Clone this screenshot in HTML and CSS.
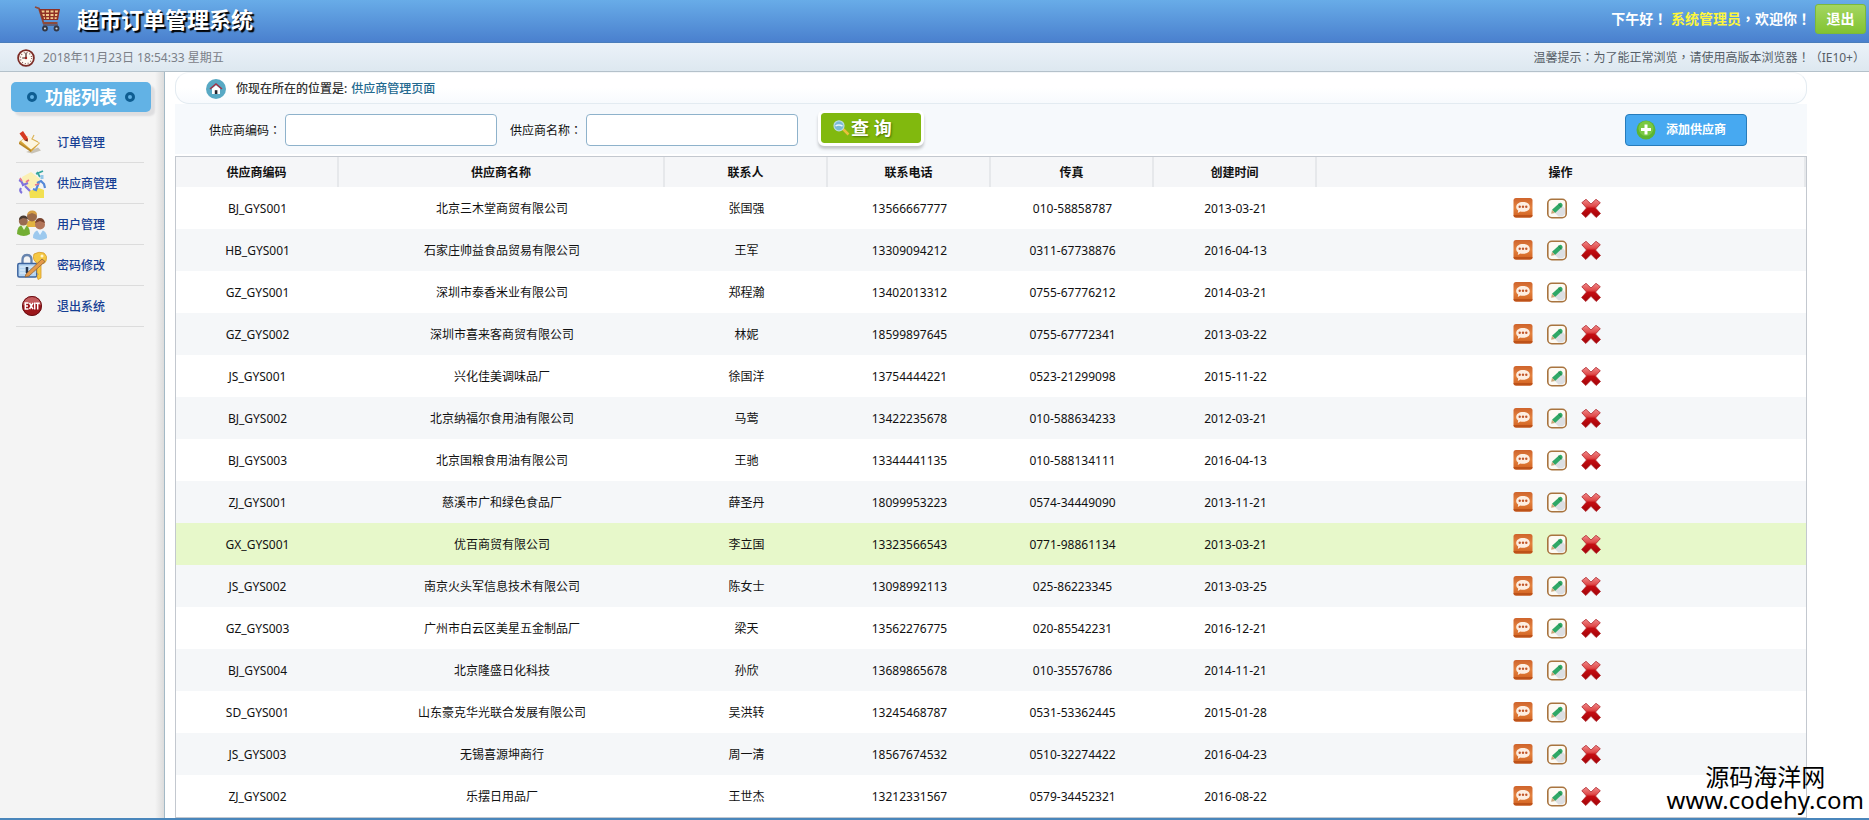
FILE: index.html
```html
<!DOCTYPE html>
<html lang="zh-CN">
<head>
<meta charset="utf-8">
<title>超市订单管理系统</title>
<link rel="stylesheet" href="styles.css">
</head>
<body>
<svg class="sprite" aria-hidden="true">
  <defs>
    <linearGradient id="gOrange" x1="0" y1="0" x2="0" y2="1"><stop offset="0" stop-color="#cf642c"/><stop offset=".5" stop-color="#e3823f"/><stop offset="1" stop-color="#d2601f"/></linearGradient>
    <linearGradient id="gRed" x1="0" y1="0" x2="0" y2="1"><stop offset="0" stop-color="#f08a8a"/><stop offset=".38" stop-color="#e04a4a"/><stop offset=".5" stop-color="#c40d12"/><stop offset="1" stop-color="#a30308"/></linearGradient>
  </defs>
  <symbol id="view" viewBox="0 0 20 21">
    <rect x=".5" y="0" width="19" height="19.500" rx="2.500" fill="url(#gOrange)"/>
    <path d="M.5 17h19q0 2.500-2.500 2.500H3q-2.500 0-2.500-2.500z" fill="#bd5219"/>
    <path d="M10 4c4 0 6.800 2 6.800 5s-2.800 4.800-6.800 4.800c-1 0-1.900-.1-2.700-.3L4.800 15l.4-2.500C3.900 11.600 3.200 10.500 3.200 9c0-3 2.800-5 6.800-5z" fill="#fdeee2"/>
    <g fill="#c2572a"><circle cx="6.700" cy="8.800" r="1.200"/><circle cx="10" cy="8.800" r="1.200"/><circle cx="13.300" cy="8.800" r="1.200"/></g>
  </symbol>
  <symbol id="edit" viewBox="0 0 20 20">
    <rect x=".8" y=".8" width="18.400" height="18.400" rx="4" fill="#fdfaf4" stroke="#a8743f" stroke-width="1.600"/>
    <path d="M8 14.500l7.500-7 2.500 2.500v5.500l-2.500 2.500h-4z" fill="#dcdfe3"/>
    <path d="M5 11.300l7.200-6.600q1.300-1 2.700.4t.4 2.700l-7.200 6.600z" fill="#2fa866"/>
    <path d="M11.400 5.500l3.100 3.100" stroke="#1c7a47" stroke-width="1"/>
    <path d="M5 11.300l3.100 3.100-4 .8z" fill="#c9a678"/>
  </symbol>
  <symbol id="del" viewBox="0 0 20 20">
    <path d="M5 .8l5 4.700 5-4.700 4.300 3.400L14.500 9.500l5 5.500-4.300 4L10 13.800 4.800 19 .6 15l4.900-5.500L.8 4.200z" fill="url(#gRed)" stroke="#b02a2e" stroke-width=".8"/>
  </symbol>
</svg>

<header class="top">
  <h1 class="brand">
    <svg class="cart" width="28" height="27" viewBox="0 0 28 27" aria-hidden="true">
      <path d="M1 2l4 1.500 4.500 14.500h14" fill="none" stroke="#8d4a3c" stroke-width="1.800"/>
      <path d="M5 4h21l-2 11H8.500z" fill="#8f3024"/>
      <g fill="#f2c98b"><path d="M7.500 5.500h3v2h-2.500zM12 5.500h3v2h-3zM16.500 5.500h3v2h-3zM21 5.500h3l-.3 2H21z"/><path d="M8.300 9h2.400v2H9zM12 9h3v2h-3zM16.500 9h3v2h-3zM21 9h2.500l-.4 2H21zM9.500 12.300H11v1.700h-1zM12.300 12.300H15V14h-2.700zM16.500 12.300h2.700V14h-2.700zM20.600 12.300h2.200l-.3 1.700h-1.900z"/></g>
      <path d="M9 20h15" stroke="#5d5d78" stroke-width="1.800"/>
      <g fill="#cfd4dc" stroke="#343846" stroke-width="1.800"><circle cx="11" cy="23.500" r="2"/><circle cx="22.500" cy="23.500" r="2"/></g>
    </svg>
    超市订单管理系统
  </h1>
  <p class="hello">下午好<span class="mark" lang="zh-TW">！</span> <span class="user">系统管理员</span><span class="mark" lang="zh-TW">，</span>欢迎你<span class="mark" lang="zh-TW">！</span></p>
  <a class="logout" href="#">退出</a>
</header>

<section class="timebar">
  <svg width="18" height="18" viewBox="0 0 18 18" aria-hidden="true">
    <circle cx="9" cy="9" r="7.900" fill="#fffaf3" stroke="#7c2b25" stroke-width="1.800"/>
    <circle cx="9" cy="9" r="5.600" fill="none" stroke="#8a6058" stroke-width="1.200" stroke-dasharray="1 1.930"/>
    <path d="M9 3.800V9H5.200" fill="none" stroke="#3a1e1c" stroke-width="1.200"/><circle cx="9" cy="9" r="1.200" fill="#a3211c"/>
  </svg>
  <time>2018年11月23日 18:54:33 星期五</time>
  <p class="tip">温馨提示<span class="mark" lang="zh-TW">：</span>为了能正常浏览<span class="mark" lang="zh-TW">，</span>请使用高版本浏览器<span class="mark" lang="zh-TW">！（</span>IE10+<span class="mark" lang="zh-TW">）</span></p>
</section>

<div class="layout">
  <aside class="side">
    <h2 class="side-title"><i class="ring"></i>功能列表<i class="ring"></i></h2>
    <nav>
      <ul class="menu">
        <li><a href="#">
          <svg width="30" height="30" viewBox="0 0 30 30" aria-hidden="true">
            <path d="M9 24l6 1.500 9-3-3-3z" fill="#c9c3b6"/>
            <path d="M2 14l8-6 13 7-9 9z" fill="#d7a437"/><path d="M4 13l7-5 11 7-8 6.500z" fill="#fdf6e0"/>
            <path d="M2 14l12 8v2L2 16z" fill="#b88626"/>
            <path d="M17 7l-2 4 6 3" fill="none" stroke="#dcb65c" stroke-width="1.200"/>
            <path d="M2.500 5.500l3.500-2.500 5 7.500-.4 3-3-1z" fill="#d63a22"/><path d="M8 12.500l2.600 1-.2-2.500z" fill="#4d2a20"/>
          </svg>订单管理</a></li>
        <li><a href="#">
          <svg width="30" height="30" viewBox="0 0 30 30" aria-hidden="true">
            <path d="M5 8l9-5 9 7-2 6-8 4-7-5z" fill="#fbf0b4"/>
            <path d="M12 22l10-3 5 2v8H13z" fill="#f2e052"/>
            <path d="M2 11q3 1 4 5l5-2M4 19q-2 3 1 5M8 17l5 5" fill="none" stroke="#7f73dd" stroke-width="2.200"/>
            <path d="M19 5l7-3M20 3l3 5" stroke="#36a79d" stroke-width="1.800"/>
            <path d="M20 14l4-2 3 3 1 4M22 13l-3 8-3-1" fill="none" stroke="#5488d8" stroke-width="2.200"/>
            <path d="M3 9l2 3M9 13l3-2M18 16l4-1" stroke="#e8788a" stroke-width="1.600"/><path d="M25 6v4" stroke="#92c7e9" stroke-width="3"/>
          </svg>供应商管理</a></li>
        <li><a href="#">
          <svg width="30" height="30" viewBox="0 0 30 30" aria-hidden="true">
            <path d="M9 17q0-7 6-7t7 7z" fill="#e2b340"/><circle cx="15" cy="6.500" r="5" fill="#9c6b48"/><path d="M10 5q1-5 6-4.500 4 .5 4 4.500l-5-2z" fill="#d6a046"/>
            <path d="M0 24q0-9 6.500-9t6.500 9q-6 4-13 0z" fill="#73ae34"/><path d="M4 15l3 5 3-5z" fill="#e6f3d3"/><circle cx="6.300" cy="11" r="4.500" fill="#986b52"/><path d="M2 10q0-4 4-4.500t5 3.500l-5-1z" fill="#493a31"/>
            <path d="M16 28q0-8 7-8t7 8q-7 4-14 0z" fill="#9cc9ee"/><path d="M20 20l3 5 3-5z" fill="#eaf5ff"/><circle cx="23" cy="14.500" r="5" fill="#b3765a"/><path d="M18 13q1-5 5-5t5 5l-5-2z" fill="#79432e"/>
          </svg>用户管理</a></li>
        <li><a href="#">
          <svg width="30" height="30" viewBox="0 0 30 30" aria-hidden="true">
            <path d="M5.500 13V9q0-5 4.500-5t4.500 5v4" fill="none" stroke="#6784ae" stroke-width="2.300"/>
            <rect x=".8" y="12.500" width="19" height="13.500" rx="1.500" fill="#b6d5f2" stroke="#3d649f" stroke-width="1.500"/>
            <path d="M3 16h14M3 19h12M3 22h14" stroke="#e3f0fb" stroke-width="1"/><path d="M10 16v6" stroke="#27364f" stroke-width="2.500"/>
            <path d="M17 3q5-3 10-1 4 3 2 8-1 3-5 3v14l-3 1.500-1-4 1.500-1-1.500-2V12q-5-3-3-9z" fill="#f5c844" stroke="#d79b28" stroke-width=".8"/><circle cx="25" cy="5" r="1.500" fill="#fff6d0"/>
            <path d="M9 23L25 8l3 2.500L12 25l-4 1z" fill="#e59a4b" stroke="#8d643f" stroke-width=".8"/>
          </svg>密码修改</a></li>
        <li><a href="#">
          <svg width="30" height="30" viewBox="0 0 30 30" aria-hidden="true">
            <circle cx="15" cy="14" r="9.900" fill="#9c171b"/><path d="M5.500 13.500q1-9 9.500-9t9.500 9q-9-4-19 0z" fill="#c55c5e"/><circle cx="15" cy="14" r="9.500" fill="none" stroke="#681014" stroke-width="1"/>
            <g fill="none" stroke="#fff" stroke-width="1.500"><path d="M11.500 11H8.300v6h3.200M8.300 14H11M12.500 11l3.500 6M16 11l-3.500 6M17.700 10.500v7M18.700 11.300h4M20.700 11v6.500"/></g>
          </svg>退出系统</a></li>
      </ul>
    </nav>
  </aside>

  <main class="main">
    <div class="crumb">
      <svg width="20" height="20" viewBox="0 0 20 20" aria-hidden="true"><circle cx="10" cy="10" r="10" fill="#58a9c4"/><path d="M6 9.500l4-3.500 4 3.500V15H6z" fill="#fff"/><path d="M4 10l6-5 6 5" fill="none" stroke="#a03346" stroke-width="1.600"/><path d="M8.800 11.200h2.600V15H8.800z" fill="#26232b"/></svg>
      <strong>你现在所在的位置是:</strong>
      <span class="here">供应商管理页面</span>
    </div>

    <form class="search" onsubmit="return false">
      <label for="code">供应商编码<span class="mark" lang="zh-TW">：</span></label>
      <input id="code" type="text">
      <label class="second" for="name">供应商名称<span class="mark" lang="zh-TW">：</span></label>
      <input id="name" type="text">
      <button class="query" type="submit">
        <svg width="17" height="16" viewBox="0 0 17 16" aria-hidden="true"><path d="M9.500 8.500l6 6" stroke="#e8bf3c" stroke-width="2.500"/><circle cx="6" cy="5.800" r="5" fill="#79b9d6" stroke="#b9dbe2" stroke-width="1.200"/><path d="M2.500 6q3-2 7 0" fill="none" stroke="#e8f6fb" stroke-width="1.400"/></svg>查 询</button>
      <a class="add" href="#">
        <svg width="20" height="20" viewBox="0 0 20 20" aria-hidden="true"><circle cx="10" cy="10" r="9.500" fill="#5cb531"/><circle cx="10" cy="8.500" r="7.500" fill="#79c843"/><path d="M10 4.500v10M5 9.500h10" stroke="#fff" stroke-width="3"/></svg>添加供应商</a>
    </form>

    <table class="grid">
      <colgroup><col class="c1"><col class="c2"><col class="c1"><col class="c1"><col class="c1"><col class="c1"><col class="c3"></colgroup>
      <thead><tr><th>供应商编码</th><th>供应商名称</th><th>联系人</th><th>联系电话</th><th>传真</th><th>创建时间</th><th>操作</th></tr></thead>
      <tbody>
        <tr><td>BJ_GYS001</td><td>北京三木堂商贸有限公司</td><td>张国强</td><td>13566667777</td><td>010-58858787</td><td>2013-03-21</td><td><div class="ops"><a href="#" aria-label="查看"><svg><use href="#view"/></svg></a><a href="#" aria-label="修改"><svg><use href="#edit"/></svg></a><a href="#" aria-label="删除"><svg><use href="#del"/></svg></a></div></td></tr>
        <tr><td>HB_GYS001</td><td>石家庄帅益食品贸易有限公司</td><td>王军</td><td>13309094212</td><td>0311-67738876</td><td>2016-04-13</td><td><div class="ops"><a href="#" aria-label="查看"><svg><use href="#view"/></svg></a><a href="#" aria-label="修改"><svg><use href="#edit"/></svg></a><a href="#" aria-label="删除"><svg><use href="#del"/></svg></a></div></td></tr>
        <tr><td>GZ_GYS001</td><td>深圳市泰香米业有限公司</td><td>郑程瀚</td><td>13402013312</td><td>0755-67776212</td><td>2014-03-21</td><td><div class="ops"><a href="#" aria-label="查看"><svg><use href="#view"/></svg></a><a href="#" aria-label="修改"><svg><use href="#edit"/></svg></a><a href="#" aria-label="删除"><svg><use href="#del"/></svg></a></div></td></tr>
        <tr><td>GZ_GYS002</td><td>深圳市喜来客商贸有限公司</td><td>林妮</td><td>18599897645</td><td>0755-67772341</td><td>2013-03-22</td><td><div class="ops"><a href="#" aria-label="查看"><svg><use href="#view"/></svg></a><a href="#" aria-label="修改"><svg><use href="#edit"/></svg></a><a href="#" aria-label="删除"><svg><use href="#del"/></svg></a></div></td></tr>
        <tr><td>JS_GYS001</td><td>兴化佳美调味品厂</td><td>徐国洋</td><td>13754444221</td><td>0523-21299098</td><td>2015-11-22</td><td><div class="ops"><a href="#" aria-label="查看"><svg><use href="#view"/></svg></a><a href="#" aria-label="修改"><svg><use href="#edit"/></svg></a><a href="#" aria-label="删除"><svg><use href="#del"/></svg></a></div></td></tr>
        <tr><td>BJ_GYS002</td><td>北京纳福尔食用油有限公司</td><td>马莺</td><td>13422235678</td><td>010-588634233</td><td>2012-03-21</td><td><div class="ops"><a href="#" aria-label="查看"><svg><use href="#view"/></svg></a><a href="#" aria-label="修改"><svg><use href="#edit"/></svg></a><a href="#" aria-label="删除"><svg><use href="#del"/></svg></a></div></td></tr>
        <tr><td>BJ_GYS003</td><td>北京国粮食用油有限公司</td><td>王驰</td><td>13344441135</td><td>010-588134111</td><td>2016-04-13</td><td><div class="ops"><a href="#" aria-label="查看"><svg><use href="#view"/></svg></a><a href="#" aria-label="修改"><svg><use href="#edit"/></svg></a><a href="#" aria-label="删除"><svg><use href="#del"/></svg></a></div></td></tr>
        <tr><td>ZJ_GYS001</td><td>慈溪市广和绿色食品厂</td><td>薛圣丹</td><td>18099953223</td><td>0574-34449090</td><td>2013-11-21</td><td><div class="ops"><a href="#" aria-label="查看"><svg><use href="#view"/></svg></a><a href="#" aria-label="修改"><svg><use href="#edit"/></svg></a><a href="#" aria-label="删除"><svg><use href="#del"/></svg></a></div></td></tr>
        <tr class="active"><td>GX_GYS001</td><td>优百商贸有限公司</td><td>李立国</td><td>13323566543</td><td>0771-98861134</td><td>2013-03-21</td><td><div class="ops"><a href="#" aria-label="查看"><svg><use href="#view"/></svg></a><a href="#" aria-label="修改"><svg><use href="#edit"/></svg></a><a href="#" aria-label="删除"><svg><use href="#del"/></svg></a></div></td></tr>
        <tr><td>JS_GYS002</td><td>南京火头军信息技术有限公司</td><td>陈女士</td><td>13098992113</td><td>025-86223345</td><td>2013-03-25</td><td><div class="ops"><a href="#" aria-label="查看"><svg><use href="#view"/></svg></a><a href="#" aria-label="修改"><svg><use href="#edit"/></svg></a><a href="#" aria-label="删除"><svg><use href="#del"/></svg></a></div></td></tr>
        <tr><td>GZ_GYS003</td><td>广州市白云区美星五金制品厂</td><td>梁天</td><td>13562276775</td><td>020-85542231</td><td>2016-12-21</td><td><div class="ops"><a href="#" aria-label="查看"><svg><use href="#view"/></svg></a><a href="#" aria-label="修改"><svg><use href="#edit"/></svg></a><a href="#" aria-label="删除"><svg><use href="#del"/></svg></a></div></td></tr>
        <tr><td>BJ_GYS004</td><td>北京隆盛日化科技</td><td>孙欣</td><td>13689865678</td><td>010-35576786</td><td>2014-11-21</td><td><div class="ops"><a href="#" aria-label="查看"><svg><use href="#view"/></svg></a><a href="#" aria-label="修改"><svg><use href="#edit"/></svg></a><a href="#" aria-label="删除"><svg><use href="#del"/></svg></a></div></td></tr>
        <tr><td>SD_GYS001</td><td>山东豪克华光联合发展有限公司</td><td>吴洪转</td><td>13245468787</td><td>0531-53362445</td><td>2015-01-28</td><td><div class="ops"><a href="#" aria-label="查看"><svg><use href="#view"/></svg></a><a href="#" aria-label="修改"><svg><use href="#edit"/></svg></a><a href="#" aria-label="删除"><svg><use href="#del"/></svg></a></div></td></tr>
        <tr><td>JS_GYS003</td><td>无锡喜源坤商行</td><td>周一清</td><td>18567674532</td><td>0510-32274422</td><td>2016-04-23</td><td><div class="ops"><a href="#" aria-label="查看"><svg><use href="#view"/></svg></a><a href="#" aria-label="修改"><svg><use href="#edit"/></svg></a><a href="#" aria-label="删除"><svg><use href="#del"/></svg></a></div></td></tr>
        <tr><td>ZJ_GYS002</td><td>乐摆日用品厂</td><td>王世杰</td><td>13212331567</td><td>0579-34452321</td><td>2016-08-22</td><td><div class="ops"><a href="#" aria-label="查看"><svg><use href="#view"/></svg></a><a href="#" aria-label="修改"><svg><use href="#edit"/></svg></a><a href="#" aria-label="删除"><svg><use href="#del"/></svg></a></div></td></tr>
      </tbody>
    </table>
  </main>
</div>
<footer class="foot"></footer>
<p class="watermark">源码海洋网<br>www.codehy.com</p>
</body>
</html>
```
FILE: styles.css
```css
* { box-sizing: border-box; }

body, h1, h2, p, ul { margin: 0; padding: 0; }

body {
  position: relative;
  display: flex;
  flex-direction: column;
  min-height: 100vh;
  background: #fff;
  color: #111;
  font: 12px/18px "Noto Sans", "Noto Sans CJK SC", sans-serif;
}

a { color: inherit; text-decoration: none; }
ul { list-style: none; }
svg { display: block; flex: none; }
.sprite { position: absolute; width: 0; height: 0; }

/* full-width punctuation centred in its cell */
.mark { font-family: "Noto Sans CJK TC", sans-serif; }

/* header */
.top {
  display: flex;
  align-items: center;
  height: 43px;
  padding: 0 3px 5px 34px;
  background: linear-gradient(#68ace8, #4a80ce);
  border-bottom: 1px solid #4a7dbb;
  color: #fff;
}
.brand {
  display: flex;
  align-items: center;
  gap: 15px;
  font-size: 22px;
  line-height: 32px;
  text-shadow: 2px 2px 1px #000;
}
.hello {
  margin: 0 4px 0 auto;
  font-size: 14px;
  font-weight: bold;
}
.user { color: #fdf63c; }
.logout {
  width: 51px;
  border: 1px solid #7cb93a;
  border-radius: 3px;
  background: linear-gradient(#a4d660, #82c332);
  font-size: 14px;
  font-weight: bold;
  line-height: 28px;
  text-align: center;
}

/* date and tip */
.timebar {
  display: flex;
  align-items: center;
  gap: 8px;
  height: 29px;
  padding: 1px 4px 0 17px;
  background: linear-gradient(#ebf2f9, #dde8f0);
  border-bottom: 1px solid #b4c1ca;
  color: #7b8088;
}
.tip { margin-left: auto; color: #555d66; }

.layout { display: flex; flex: 1; }

/* sidebar */
.side {
  width: 165px;
  flex: none;
  padding: 10px 13px 0 11px;
  background: linear-gradient(to left, #dcdcdc, #f4f4f4 9px);
  border-right: 1px solid #a3b9c6;
}
.side-title {
  display: flex;
  align-items: center;
  justify-content: center;
  gap: 8px;
  border-radius: 5px;
  background: #62b2e5;
  box-shadow: 4px 4px 2px #dedee0;
  color: #fff;
  font-size: 18px;
  line-height: 30px;
}
.ring {
  width: 10px;
  height: 10px;
  border: 3px solid #0e5d91;
  border-radius: 50%;
}
.menu { margin: 10px 7px 0 5px; }
.menu a {
  display: flex;
  align-items: center;
  gap: 10px;
  height: 41px;
  padding: 2px 0 0 1px;
  border-bottom: 1px solid #dcdcdc;
  color: #153e93;
  font-weight: 500;
}

/* content */
.main { flex: 1; padding: 0 62px 0 10px; }
.crumb {
  display: flex;
  align-items: center;
  height: 32px;
  padding: 2px 30px 0;
  border: 1px solid #e3ebf1;
  border-top-color: #f3f6f8;
  border-radius: 14px;
  background: linear-gradient(#fff 50%, #f7fafd);
}
.crumb strong { margin: 0 4px 0 10px; color: #333; font-weight: 500; }
.here { color: #23698f; font-weight: 500; }
.search {
  display: flex;
  align-items: center;
  height: 50px;
  margin-bottom: 2px;
  padding: 2px 60px 0 34px;
  background: #f6f9fc;
}
.search input {
  width: 212px;
  height: 32px;
  margin-left: 4px;
  padding: 0 8px;
  border: 1px solid #8eb2cb;
  border-radius: 4px;
  background: #fff;
  font: inherit;
}
.second { margin-left: 13px; }
.query {
  display: flex;
  align-items: center;
  gap: 1px;
  width: 106px;
  height: 36px;
  margin: 0 0 4px 20px;
  padding: 0 12px;
  border: 3px solid #fff;
  border-radius: 6px;
  background: #81b90e;
  background-clip: padding-box;
  box-shadow: 0 3px 3px #c4c7ca;
  color: #fff;
  font: bold 18px/28px "Noto Sans", "Noto Sans CJK SC", sans-serif;
  text-shadow: 1px 1px 2px #4c7203;
}
.add {
  display: flex;
  align-items: center;
  gap: 10px;
  width: 122px;
  height: 32px;
  margin-left: auto;
  padding-left: 10px;
  border: 1px solid #277cbb;
  border-radius: 4px;
  background: #47a9f1;
  color: #fff;
  font-weight: bold;
}

/* supplier table */
.grid {
  width: 100%;
  table-layout: fixed;
  border: 1px solid #c3c8cf;
  border-spacing: 0;
  text-align: center;
}
.c1 { width: 10%; }
.c2 { width: 20%; }
.c3 { width: 30%; }
.grid th, .grid td { padding: 2px 0 0; }
.grid td:last-child { padding: 0; }
.grid th {
  height: 30px;
  border-right: 2px solid #e6e8eb;
  background: #f5f6f8;
  font-weight: bold;
}
.grid td { height: 42px; }
.grid tbody tr:nth-child(even) { background: #f5f7f9; }
.grid tbody tr.active { background: #e7f8ca; }
.ops {
  display: flex;
  justify-content: center;
  gap: 14px;
  padding-right: 10px;
}
.ops svg { width: 20px; height: 21px; }

.foot { height: 2px; background: #4a86bb; }

.watermark {
  position: absolute;
  right: 5px;
  bottom: 9px;
  color: #000;
  font-size: 24px;
  line-height: 23px;
  text-align: center;
}
```
